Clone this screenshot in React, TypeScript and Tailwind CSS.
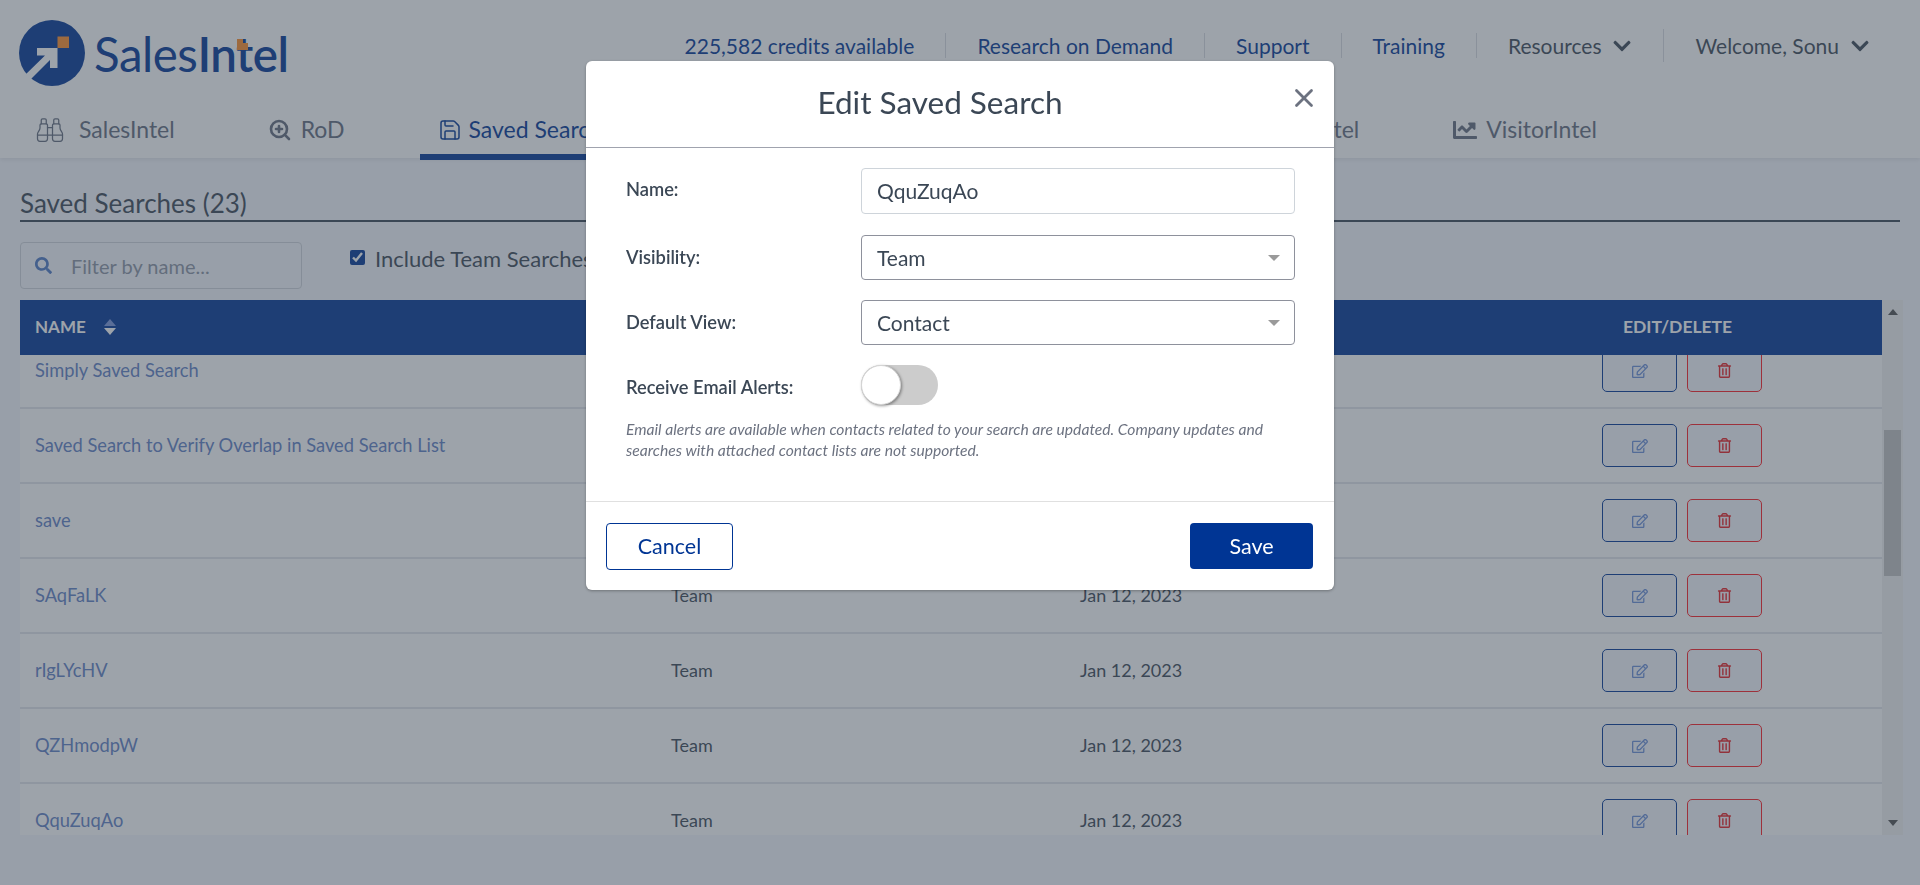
import { Binoculars, Save, X, ZoomIn } from 'lucide-react';
import { FaChartLine, FaChevronDown, FaRegEdit, FaRegTrashAlt, FaSearch } from 'react-icons/fa';

const rows = [
  'Simply Saved Search',
  'Saved Search to Verify Overlap in Saved Search List',
  'save',
  'SAqFaLK',
  'rIgLYcHV',
  'QZHmodpW',
  'QquZuqAo',
];

function Logo() {
  return (
    <div className="flex items-center">
      <svg width="66" height="66" viewBox="19 20 66 66" className="shrink-0">
        <circle cx="52" cy="53" r="33" fill="#003594" />
        <rect x="57.5" y="36.5" width="11.5" height="11.5" fill="#ff8c28" />
        <polygon points="37,48 57.5,48 57.5,68 50,68 50,60 28,82 23,77 45,55.5 37,55.5" fill="#ffffff" />
      </svg>
      <div className="relative ml-[9px] pt-[2px] text-[47.5px] leading-none tracking-[-0.5px] text-[#003594]">
        Sales<span className="font-semibold">Intel</span>
        <svg width="11" height="11" viewBox="0 0 11 11" className="absolute left-[143px] top-[11px]">
          <path d="M0 0h6v4h5v7H0z" fill="#ff8c28" />
        </svg>
      </div>
    </div>
  );
}

function Tab({ icon, label, active, gap }: { icon?: React.ReactNode; label: string; active?: boolean; gap?: string }) {
  return (
    <div className={`flex h-[43px] items-center text-[23px] ${gap ?? 'gap-[11px]'} ${active ? 'text-[#003594]' : 'text-[#626b7c]'}`}>
      {icon}
      <span>{label}</span>
    </div>
  );
}

function Header() {
  return (
    <header className="h-[158px] bg-white shadow-[0_2px_4px_rgba(0,0,0,0.08)]">
      <div className="flex h-[108px] items-start justify-between pl-[19px] pr-[50px] pt-[20px]">
        <Logo />
        <nav className="mt-[9px] flex h-[33px] items-center text-[21px]">
          <a className="flex h-[25px] items-center border-r border-[#d8dbe1] pr-[31px] text-[#003594]">225,582 credits available</a>
          <a className="flex h-[25px] items-center border-r border-[#d8dbe1] px-[31px] text-[#003594]">Research on Demand</a>
          <a className="flex h-[25px] items-center border-r border-[#d8dbe1] px-[31px] text-[#003594]">Support</a>
          <a className="flex h-[25px] items-center border-r border-[#d8dbe1] px-[31px] text-[#003594]">Training</a>
          <a className="flex h-[33px] items-center gap-[11px] border-r border-[#d8dbe1] px-[31px] text-[#3b4755]">
            Resources <FaChevronDown className="text-[20px]" />
          </a>
          <a className="flex h-[33px] items-center gap-[11px] pl-[31px] text-[#3b4755]">
            Welcome, Sonu <FaChevronDown className="text-[20px]" />
          </a>
        </nav>
      </div>
      <div className="flex h-[50px] pl-[35px]">
        <Tab icon={<Binoculars size={30} strokeWidth={1} />} label="SalesIntel" gap="gap-[14px]" />
        <div className="ml-[93px]">
          <Tab icon={<ZoomIn size={24} strokeWidth={2.6} />} label="RoD" gap="gap-[9px]" />
        </div>
        <div className="relative ml-[93px]">
          <Tab icon={<Save size={24} strokeWidth={1.5} />} label="Saved Searches" active gap="gap-[7px]" />
          <div className="absolute -left-[18px] -right-[19px] bottom-[-2px] h-[6px] bg-[#003594]" />
        </div>
        <div className="ml-[94px] flex w-[641px] justify-end">
          <Tab label="Intel" />
        </div>
        <div className="ml-[94px]">
          <Tab icon={<FaChartLine className="text-[24px]" />} label="VisitorIntel" gap="gap-[9px]" />
        </div>
      </div>
    </header>
  );
}

function SortMark() {
  return (
    <svg width="12" height="16" viewBox="0 0 12 16">
      <polygon points="0,7 6,0 12,7" fill="#7995db" />
      <polygon points="0,9 12,9 6,16" fill="#ffffff" />
    </svg>
  );
}

function SavedTable() {
  return (
    <div className="-mr-[3px] mt-[11px] flex h-[535px]">
      <div className="flex min-w-0 flex-1 flex-col">
        <div className="grid h-[55px] shrink-0 grid-cols-[636px_409px_522px_1fr] items-center bg-[#003594] pb-[1px] pl-[15px] font-bold text-white">
          <div className="flex items-center gap-[18px] text-[17px]">
            NAME <SortMark />
          </div>
          <div className="text-[16px]">VISIBILITY</div>
          <div className="text-[16px]">DATE</div>
          <div className="pl-[21px] text-[17.5px]">EDIT/DELETE</div>
        </div>
        <div className="flex-1 overflow-hidden bg-white">
          <div className="-mt-[21px]">
            {rows.map((name) => (
              <div
                key={name}
                className="grid h-[75px] grid-cols-[636px_409px_522px_1fr] items-center border-b-2 border-[#e3e5ea] pl-[15px] text-[18px] text-[#3b4755]"
              >
                <a className="text-[18.3px] text-[#5f80c4]">{name}</a>
                <div>Team</div>
                <div>Jan 12, 2023</div>
                <div className="flex gap-[10px]">
                  <button className="flex h-[43px] w-[75px] items-center justify-center rounded-[5px] border border-[#003594] bg-[#f5f7fd] text-[16px] text-[#6a8fd8]">
                    <FaRegEdit />
                  </button>
                  <button className="flex h-[43px] w-[75px] items-center justify-center rounded-[5px] border border-[#ff1a20] bg-[#f5f7fd] text-[15px] text-[#e81c20]">
                    <FaRegTrashAlt />
                  </button>
                </div>
              </div>
            ))}
          </div>
        </div>
      </div>
      <div className="flex w-[21px] shrink-0 flex-col items-center bg-[#f1f1f1]">
        <div className="mt-[9px] h-0 w-0 border-x-[5px] border-b-[6px] border-x-transparent border-b-[#505050]" />
        <div className="mt-[115px] h-[146px] w-[17px] bg-[#c1c1c1]" />
        <div className="mt-auto mb-[9px] h-0 w-0 border-x-[5px] border-t-[6px] border-x-transparent border-t-[#505050]" />
      </div>
    </div>
  );
}

function SelectBox({ value }: { value: string }) {
  return (
    <div className="flex h-[45px] w-[434px] items-center justify-between rounded-[4px] border border-[#8e919c] pl-[15px] pr-[14px] text-[21px] text-[#3b4755]">
      {value}
      <div className="h-0 w-0 border-x-[6px] border-t-[6px] border-x-transparent border-t-[#9a9a9a]" />
    </div>
  );
}

function EditModal() {
  return (
    <div className="fixed inset-0 flex justify-center bg-[#3b4755]/50">
      <div className="mt-[61px] h-[529px] w-[748px] rounded-[6px] bg-white shadow-[0_1px_3px_rgba(0,0,0,0.3)]">
        <div className="relative flex h-[87px] items-center justify-center border-b border-[#a0a3ae] pb-[2px] pr-[40px] text-[31.5px] text-[#3b4755]">
          Edit Saved Search
          <X size={30} strokeWidth={2.2} className="absolute right-[15px] top-[22px] text-[#6c7280]" />
        </div>
        <div className="px-[39px] pt-[20px]">
          <div className="flex items-center">
            <label className="ml-[1px] w-[235px] pb-[2px] text-[18.3px] font-semibold text-[#3b4755]">Name:</label>
            <div className="flex h-[46px] w-[434px] items-center rounded-[4px] border border-[#ced4da] pl-[15px] text-[21px] text-[#3b4755]">
              QquZuqAo
            </div>
          </div>
          <div className="mt-[21px] flex items-center">
            <label className="ml-[1px] w-[235px] text-[18.3px] font-semibold text-[#3b4755]">Visibility:</label>
            <SelectBox value="Team" />
          </div>
          <div className="mt-[20px] flex items-center">
            <label className="ml-[1px] w-[235px] pt-[1px] text-[18.3px] font-semibold text-[#3b4755]">Default View:</label>
            <SelectBox value="Contact" />
          </div>
          <div className="mt-[20px] flex items-center">
            <label className="ml-[1px] w-[235px] pt-[6px] text-[18.3px] font-semibold text-[#3b4755]">Receive Email Alerts:</label>
            <div className="h-[40px] w-[77px] rounded-full bg-[#cccccc]">
              <div className="h-[40px] w-[40px] rounded-full border border-[#d5d5d5] bg-white shadow-[1px_1px_3px_rgba(0,0,0,0.4)]" />
            </div>
          </div>
          <p className="ml-[1px] mt-[14px] text-[15.65px] italic leading-[21px] text-[#6c7280]">
            Email alerts are available when contacts related to your search are updated. Company updates and
            <br />
            searches with attached contact lists are not supported.
          </p>
        </div>
        <div className="mt-[40px] flex h-[89px] items-center justify-between border-t border-[#e0e0e0] pl-[20px] pr-[21px]">
          <button className="h-[47px] w-[127px] rounded-[4px] border border-[#003594] bg-white text-[21.5px] text-[#003594]">
            Cancel
          </button>
          <button className="h-[46px] w-[123px] rounded-[4px] bg-[#003594] text-[21.5px] text-white">Save</button>
        </div>
      </div>
    </div>
  );
}

export default function App() {
  return (
    <div className="h-screen overflow-hidden bg-[#f5f7fd] font-['Lato',sans-serif]">
      <Header />
      <main className="pl-[20px] pr-[20px] pt-[29px]">
        <div className="flex h-[35px] items-center border-b-2 border-[#3b4755] text-[26px] text-[#3b4755]">
          Saved Searches (23)
        </div>
        <div className="mt-[20px] flex h-[47px] items-start">
          <div className="flex h-[47px] w-[282px] items-center rounded-[4px] border border-[#cfd3da] pl-[14px] text-[20px] text-[#8b93a3]">
            <FaSearch className="mr-[19px] text-[17px] text-[#4d78c4]" />
            Filter by name...
          </div>
          <label className="ml-[48px] flex items-center gap-[10px] text-[22px] text-[#3b4755]">
            <input type="checkbox" defaultChecked className="h-[15px] w-[15px] -translate-y-[1px] accent-[#003594]" />
            Include Team Searches
          </label>
        </div>
        <SavedTable />
      </main>
      <EditModal />
    </div>
  );
}
